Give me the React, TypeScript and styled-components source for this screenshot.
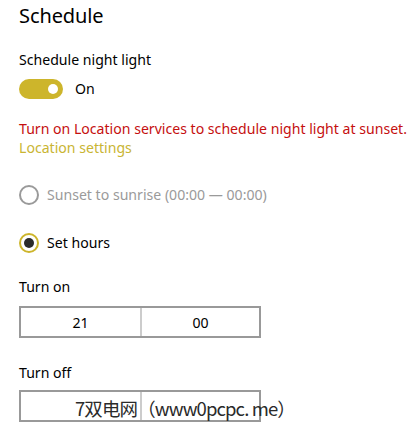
import React from "react";
import styled, { createGlobalStyle } from "styled-components";

const Global = createGlobalStyle`
  html, body { margin: 0; padding: 0; background: #fff; }
  body { font-family: "Noto Sans", "Open Sans", Arial, sans-serif; color: #000; }
`;

const Page = styled.div`
  position: relative;
  width: 417px;
  height: 429px;
  overflow: hidden;
  padding: 0 0 0 19px;
  box-sizing: border-box;
  display: flex;
  flex-direction: column;
`;

const Heading = styled.h1`
  margin: 2px 0 0;
  font-size: 20px;
  font-weight: 400;
  line-height: 28px;
  letter-spacing: -0.1px;
`;

const Label = styled.div<{ $top: number }>`
  margin-top: ${(p) => p.$top}px;
  font-size: 14.1px;
  line-height: 20px;
`;

const ToggleRow = styled.div`
  display: flex;
  align-items: center;
  gap: 12px;
  margin-top: 9px;
  font-size: 14.1px;
  line-height: 20px;
`;

const Track = styled.div<{ $on: boolean }>`
  width: 44px;
  height: 20px;
  border-radius: 10px;
  background: ${(p) => (p.$on ? "#cdb52b" : "#fff")};
  display: flex;
  align-items: center;
  justify-content: ${(p) => (p.$on ? "flex-end" : "flex-start")};
  padding: 0 5px;
  box-sizing: border-box;
`;

const Knob = styled.div`
  width: 10px;
  height: 10px;
  border-radius: 50%;
  background: #fff;
`;

const Warning = styled.div`
  margin-top: 20px;
  font-size: 14.1px;
  line-height: 19px;
  color: #c50f0f;
  white-space: nowrap;
`;

const Link = styled.div`
  font-size: 14.1px;
  line-height: 19px;
  color: #c9b533;
`;

const RadioRow = styled.div<{ $disabled?: boolean; $top: number }>`
  display: flex;
  align-items: center;
  gap: 8px;
  margin-top: ${(p) => p.$top}px;
  font-size: 14.1px;
  line-height: 20px;
  color: ${(p) => (p.$disabled ? "#9a9a9a" : "#000")};
`;

const RadioCircle = styled.div<{ $checked?: boolean; $disabled?: boolean }>`
  width: 20px;
  height: 20px;
  box-sizing: border-box;
  border-radius: 50%;
  border: 2px solid
    ${(p) => (p.$disabled ? "#9a9a9a" : p.$checked ? "#cdb52b" : "#000")};
  display: flex;
  align-items: center;
  justify-content: center;
`;

const Dot = styled.div`
  width: 10px;
  height: 10px;
  border-radius: 50%;
  background: #2b2b2b;
`;

const TimeBox = styled.div<{ $top: number }>`
  margin-top: ${(p) => p.$top}px;
  width: 242px;
  height: 32px;
  box-sizing: border-box;
  border: 2px solid #999;
  display: grid;
  grid-template-columns: 1fr 1fr;
  font-size: 14.1px;
`;

const Cell = styled.div<{ $divider?: boolean }>`
  display: flex;
  align-items: center;
  justify-content: center;
  border-left: ${(p) => (p.$divider ? "2px solid #ccc" : "none")};
`;

const Watermark = styled.div`
  position: absolute;
  left: 75px;
  top: 396px;
  font-family: "Noto Sans CJK SC", "Noto Sans", sans-serif;
  font-size: 18.5px;
  line-height: 24px;
  color: #2a2a2a;
  white-space: nowrap;
  letter-spacing: -0.9px;
`;

export default function App() {
  return (
    <>
      <Global />
      <Page>
        <Heading>Schedule</Heading>
        <Label $top={20}>Schedule night light</Label>
        <ToggleRow>
          <Track $on>
            <Knob />
          </Track>
          <span>On</span>
        </ToggleRow>
        <Warning>Turn on Location services to schedule night light at sunset.</Warning>
        <Link>Location settings</Link>
        <RadioRow $disabled $top={28}>
          <RadioCircle $disabled />
          <span>Sunset to sunrise (00:00 — 00:00)</span>
        </RadioRow>
        <RadioRow $top={28}>
          <RadioCircle $checked>
            <Dot />
          </RadioCircle>
          <span>Set hours</span>
        </RadioRow>
        <Label $top={24}>Turn on</Label>
        <TimeBox $top={9}>
          <Cell>21</Cell>
          <Cell $divider>00</Cell>
        </TimeBox>
        <Label $top={25}>Turn off</Label>
        <TimeBox $top={7}>
          <Cell />
          <Cell $divider />
        </TimeBox>
        <Watermark>7双电网（www0pcpc. me）</Watermark>
      </Page>
    </>
  );
}
